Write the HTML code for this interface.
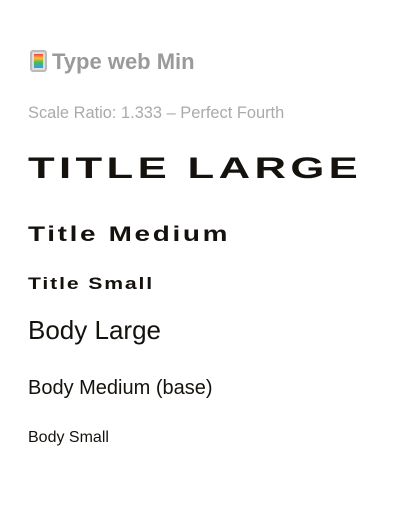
<!DOCTYPE html>
<html><head><meta charset="utf-8"><style>
html,body{margin:0;padding:0;background:#fff;width:411px;height:518px;overflow:hidden;position:relative}
div.t{position:absolute;left:28px;line-height:1;white-space:nowrap;font-family:"Liberation Sans",sans-serif;transform-origin:0 50%}
</style></head><body>
<div class="t" style="top:50px;left:30px;font-size:22px;line-height:24px;color:#9a9a9a;font-weight:bold">
<span style="display:inline-block;width:17px;height:22px;background:#ddd;border:2px solid #bbb;border-radius:3px;vertical-align:-3px;margin-right:5px;position:relative;box-sizing:border-box"><span style="position:absolute;left:2px;top:2px;width:9px;height:14px;background:linear-gradient(#e44,#fb3 30%,#4b5 60%,#39f)"></span></span>Type web Min</div>
<div class="t" style="top:104px;font-size:17px;color:#aaa;transform:scaleX(0.965)">Scale Ratio: 1.333 – Perfect Fourth</div>
<div class="t" style="top:154px;font-size:30px;font-weight:bold;color:#15120e;letter-spacing:3px;transform:scaleX(1.455)">TITLE LARGE</div>
<div class="t" style="top:224px;font-size:21px;font-weight:bold;color:#15120e;letter-spacing:2px;transform:scaleX(1.33)">Title Medium</div>
<div class="t" style="top:275px;font-size:17px;font-weight:bold;color:#15120e;letter-spacing:1.5px;transform:scaleX(1.245)">Title Small</div>
<div class="t" style="top:317px;font-size:26px;color:#15120e">Body Large</div>
<div class="t" style="top:378px;font-size:20px;color:#15120e">Body Medium (base)</div>
<div class="t" style="top:430px;font-size:16px;color:#15120e">Body Small</div>
</body></html>
